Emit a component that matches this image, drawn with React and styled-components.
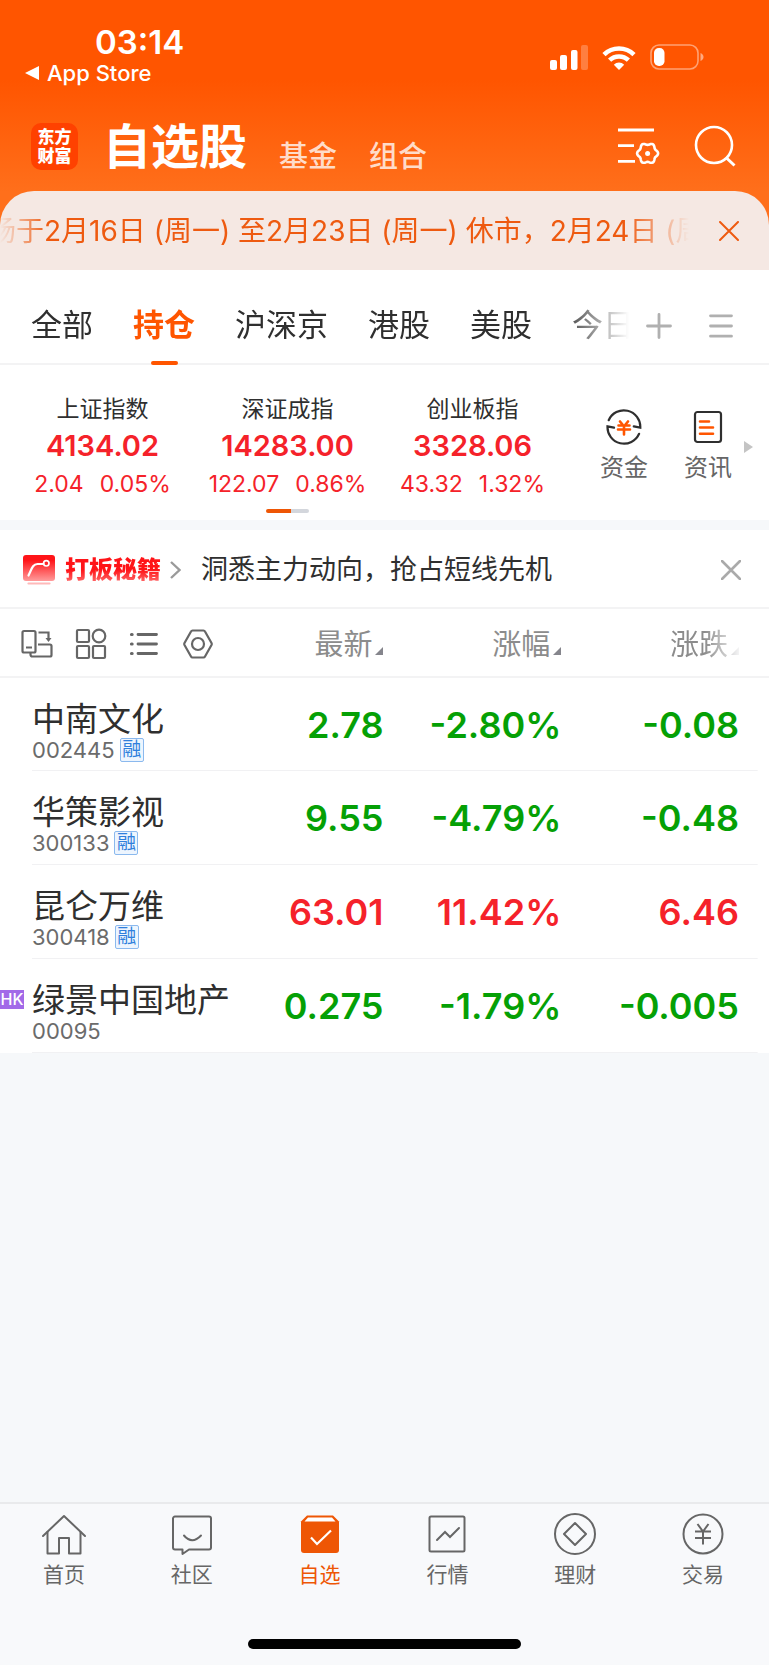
import React from "react";
import styled, { createGlobalStyle } from "styled-components";

const UP = "#f5222a";
const DOWN = "#05a005";
const ORANGE = "#ff5500";

const GlobalStyle = createGlobalStyle`
  * {
    box-sizing: border-box;
  }
  body {
    margin: 0;
    background: #f6f8fa;
    color: #2f2f2f;
    font-family: Inter, "Noto Sans CJK SC", sans-serif;
  }
  button {
    padding: 0;
    border: none;
    background: none;
    color: inherit;
    font: inherit;
    white-space: nowrap;
    cursor: pointer;
  }
  a {
    color: inherit;
    text-decoration: none;
  }
  svg {
    display: block;
    flex: none;
  }
`;

const indexes = [
  { name: "上证指数", value: "4134.02", change: "2.04", rate: "0.05%" },
  { name: "深证成指", value: "14283.00", change: "122.07", rate: "0.86%" },
  { name: "创业板指", value: "3328.06", change: "43.32", rate: "1.32%" },
];

const groups = ["全部", "持仓", "沪深京", "港股", "美股", "今日"];

const stocks = [
  { name: "中南文化", code: "002445", margin: true, price: "2.78", rate: "-2.80%", change: "-0.08" },
  { name: "华策影视", code: "300133", margin: true, price: "9.55", rate: "-4.79%", change: "-0.48" },
  { name: "昆仑万维", code: "300418", margin: true, price: "63.01", rate: "11.42%", change: "6.46", up: true },
  { name: "绿景中国地产", code: "00095", hk: true, price: "0.275", rate: "-1.79%", change: "-0.005" },
];

// 六瓣齿轮轮廓
const gearPath = (cx, cy, r, depth) => {
  const points = [];
  for (let deg = 0; deg < 360; deg += 6) {
    const t = (deg * Math.PI) / 180;
    const d = r + depth * Math.cos(6 * t);
    points.push(`${(cx + d * Math.cos(t)).toFixed(2)} ${(cy + d * Math.sin(t)).toFixed(2)}`);
  }
  return `M${points.join("L")}Z`;
};

const SignalIcon = () => (
  <svg width="38" height="25" viewBox="0 0 38 25" fill="#fff">
    <rect x="0" y="15" width="7" height="10" rx="2" />
    <rect x="10" y="10" width="7" height="15" rx="2" />
    <rect x="21" y="5" width="6.5" height="20" rx="2" />
    <rect x="31" y="0" width="7" height="25" rx="2" opacity="0.25" />
  </svg>
);

const WifiIcon = () => (
  <svg width="34" height="25" viewBox="0 0 34 25" fill="none" stroke="#fff" strokeWidth="4.6">
    <path d="M2 9.6a21.6 21.6 0 0 1 30 0" />
    <path d="M7.6 15.2a13.6 13.6 0 0 1 18.8 0" />
    <path d="M17 25l-5.2-5.3a7.5 7.5 0 0 1 10.4 0z" fill="#fff" stroke="none" />
  </svg>
);

const BatteryIcon = () => (
  <svg width="54" height="26" viewBox="0 0 54 26" fill="none">
    <rect x="1" y="1" width="47" height="24" rx="8" stroke="#fff" strokeOpacity="0.45" strokeWidth="1.6" />
    <rect x="4" y="4" width="10.5" height="18" rx="4.8" fill="#fff" />
    <path d="M50.5 9c4 1.5 4 6.5 0 8z" fill="#fff" fillOpacity="0.5" />
  </svg>
);

const ListGearIcon = () => (
  <svg width="42" height="38" viewBox="0 0 42 38" fill="none" stroke="#fff" strokeWidth="2.8">
    <path d="M0 3h36M0 18.6h16M0 34.4h17" />
    <path d={gearPath(29.6, 26.4, 9.5, 1)} strokeWidth="2.6" strokeLinejoin="round" />
    <circle cx="29.6" cy="26.4" r="2.5" fill="#fff" stroke="none" />
  </svg>
);

const SearchIcon = () => (
  <svg width="42" height="42" viewBox="0 0 42 42" fill="none" stroke="#fff" strokeWidth="2.6">
    <circle cx="20" cy="20" r="18" />
    <path d="M32 32.5l8.5 8" strokeWidth="3" />
  </svg>
);

const CloseIcon = ({ color, width = 2 }) => (
  <svg width="20" height="20" viewBox="0 0 20 20" fill="none" stroke={color} strokeWidth={width} strokeLinecap="round">
    <path d="M1 1l18 18M19 1L1 19" />
  </svg>
);

const PlusIcon = () => (
  <svg width="26" height="26" viewBox="0 0 26 26" fill="none" stroke="#b0b0b0" strokeWidth="2.8" strokeLinecap="round">
    <path d="M13 1.5v23M1.5 13h23" />
  </svg>
);

const MenuIcon = () => (
  <svg width="24" height="24" viewBox="0 0 24 24" fill="none" stroke="#b0b0b0" strokeWidth="2.8" strokeLinecap="round">
    <path d="M1.5 1.8h21M1.5 12h21M1.5 22.2h21" />
  </svg>
);

const FundIcon = () => (
  <svg width="36" height="36" viewBox="0 0 36 36" fill="none" strokeLinecap="round">
    <path d="M2.7 11.2A16.5 16.5 0 0 1 34.3 18.6l-6.5-1.3" stroke="#2f2f2f" strokeWidth="2.2" />
    <path d="M33.1 24.8A16.5 16.5 0 0 1 1.5 17.4l6.5 1.3" stroke="#2f2f2f" strokeWidth="2.2" />
    <path d="M14 12.5l2.5 3M22 12.5l-2.5 3M12.5 16.5h11M12 20.5h12M18 16.5v9" stroke="#ff5500" strokeWidth="2.6" />
  </svg>
);

const NewsIcon = () => (
  <svg width="30" height="34" viewBox="0 0 30 34" fill="none" strokeLinecap="round">
    <rect x="2" y="2" width="26" height="30" rx="2.5" stroke="#2f2f2f" strokeWidth="2.2" />
    <path d="M7 11.5h9M7 17.5h13M7 23.8h13" stroke="#ff5500" strokeWidth="2.6" />
  </svg>
);

const PromoIcon = () => (
  <svg width="32" height="30" viewBox="0 0 32 30" fill="none">
    <defs>
      <linearGradient id="promo" x1="0" y1="0" x2="0" y2="1">
        <stop offset="0.2" stopColor="#ff1418" />
        <stop offset="1" stopColor="#ff9c9c" />
      </linearGradient>
    </defs>
    <rect width="32" height="26" rx="3" fill="url(#promo)" />
    <path d="M5.5 20.5c3-6 4-11.5 9-11.500h6" stroke="#fff" strokeWidth="2.2" strokeLinecap="round" />
    <circle cx="23.3" cy="8.3" r="2.7" stroke="#fff" strokeWidth="1.7" />
    <path d="M5.5 28.5h21" stroke="#ffb9b9" strokeWidth="2.2" strokeLinecap="round" />
  </svg>
);

const ChevronIcon = () => (
  <svg width="11" height="18" viewBox="0 0 11 18" fill="none" stroke="#9a9a9a" strokeWidth="2.4">
    <path d="M1 1l8.5 8L1 17" />
  </svg>
);

const RotateIcon = () => (
  <svg width="32" height="30" viewBox="0 0 32 30" fill="none" stroke="#666" strokeWidth="2.2">
    <path d="M9 23.5H3a1.5 1.5 0 0 1-1.5-1.5V3.5A1.5 1.5 0 0 1 3 2h10a1.5 1.5 0 0 1 1.5 1.5V22a1.5 1.5 0 0 1-1.5 1.5H9M5 18.5h6" />
    <path d="M17 15.5h12a1.5 1.5 0 0 1 1.5 1.5v9a1.5 1.5 0 0 1-1.5 1.5H11.5q-2 0-2-2V24M17.5 3.5h10v7" />
    <path d="M24.5 9h6l-3 4z" fill="#666" stroke="none" />
  </svg>
);

const GridIcon = () => (
  <svg width="32" height="32" viewBox="0 0 32 32" fill="none" stroke="#666" strokeWidth="2.2">
    <rect x="2" y="2" width="12" height="12" rx="1" />
    <circle cx="24" cy="8" r="6.3" />
    <rect x="2" y="18" width="12" height="12" rx="1" />
    <rect x="18" y="18" width="12" height="12" rx="1" />
  </svg>
);

const RowsIcon = () => (
  <svg width="30" height="24" viewBox="0 0 30 24" fill="none" stroke="#666" strokeWidth="2.8" strokeLinecap="round">
    <path d="M9 2.5h18.5M9 12h18.5M9 21.5h18.5" />
    <path d="M2.5 2.5h.6M2.5 12h.6M2.5 21.5h.6" strokeWidth="3.2" />
  </svg>
);

const HexIcon = () => (
  <svg width="32" height="30" viewBox="0 0 32 30" fill="none" stroke="#666" strokeWidth="2.2" strokeLinejoin="round">
    <path d="M11.5 1.5h11q1 0 1.500 1l6.500 11.500q.5 1 0 2L24 27.500q-.5 1-1.500 1h-11q-1 0-1.500-1L3.500 16q-.5-1 0-2L10 2.500q.5-1 1.500-1z" />
    <circle cx="17" cy="15" r="6" />
  </svg>
);

const HomeIcon = () => (
  <svg width="44" height="44" viewBox="0 0 44 44" fill="none" stroke="#666" strokeWidth="2" strokeLinejoin="round" strokeLinecap="round">
    <path d="M1 23L22 3l21 20" />
    <path d="M5.5 19v21.500h11.500V25h10v15.500h11.500V19" />
  </svg>
);

const CommunityIcon = () => (
  <svg width="44" height="44" viewBox="0 0 44 44" fill="none" stroke="#666" strokeWidth="2" strokeLinejoin="round" strokeLinecap="round">
    <path d="M5 3.5h34a2 2 0 0 1 2 2v29a2 2 0 0 1-2 2H19l-6.500 4.500v-4.500H5a2 2 0 0 1-2-2v-29a2 2 0 0 1 2-2z" />
    <path d="M14 22.5q8 9.500 17 0" />
  </svg>
);

const WatchIcon = () => (
  <svg width="44" height="44" viewBox="0 0 44 44">
    <path d="M9 2.5h26l6 6V37a3 3 0 0 1-3 3H6a3 3 0 0 1-3-3V8.500z" fill="#ee5605" />
    <path d="M10 4.5h24l3.500 4H6.500z" fill="#fff" />
    <path d="M13 24.5l6 6.500 14-13.500" fill="none" stroke="#fff" strokeWidth="2.2" />
  </svg>
);

const MarketIcon = () => (
  <svg width="44" height="44" viewBox="0 0 44 44" fill="none" stroke="#666" strokeWidth="2" strokeLinecap="round">
    <rect x="4.5" y="3.5" width="35" height="35" rx="1.5" />
    <path d="M12 27l8-8 5 5 9-9" />
  </svg>
);

const WealthIcon = () => (
  <svg width="44" height="44" viewBox="0 0 44 44" fill="none" stroke="#666" strokeWidth="2" strokeLinejoin="round">
    <circle cx="22" cy="21" r="20" />
    <path d="M22 10l11 11-11 11-11-11z" />
  </svg>
);

const TradeIcon = () => (
  <svg width="44" height="44" viewBox="0 0 44 44" fill="none" stroke="#666" strokeWidth="2">
    <circle cx="22" cy="21" r="19.5" />
    <path d="M16.5 11l5.5 7.5 5.5-7.5M14 18.5h16M14 25h16M22 18.5v13" />
  </svg>
);

const tabs = [
  { label: "首页", Icon: HomeIcon },
  { label: "社区", Icon: CommunityIcon },
  { label: "自选", Icon: WatchIcon, active: true },
  { label: "行情", Icon: MarketIcon },
  { label: "理财", Icon: WealthIcon },
  { label: "交易", Icon: TradeIcon },
];

const App = () => {
  return (
    <Page>
      <GlobalStyle />
      <Header>
        <StatusBar>
          <div>
            <Time>03:14</Time>
            <BackLink href="#">App Store</BackLink>
          </div>
          <StatusIcons>
            <SignalIcon />
            <WifiIcon />
            <BatteryIcon />
          </StatusIcons>
        </StatusBar>
        <TitleBar>
          <Logo>
            <span>东方</span>
            <span>财富</span>
          </Logo>
          <Title>自选股</Title>
          <SubTitle>基金</SubTitle>
          <SubTitle>组合</SubTitle>
          <TitleActions>
            <button aria-label="设置">
              <ListGearIcon />
            </button>
            <button aria-label="搜索">
              <SearchIcon />
            </button>
          </TitleActions>
        </TitleBar>
        <Notice>
          <NoticeWindow>
            <NoticeText>场于2月16日 (周一) 至2月23日 (周一) 休市，2月24日 (周</NoticeText>
          </NoticeWindow>
          <button aria-label="关闭公告">
            <CloseIcon color="#ee5a10" />
          </button>
        </Notice>
      </Header>

      <GroupBar>
        <GroupList>
          {groups.map((name) => (
            <GroupTab key={name} $active={name === "持仓"}>
              {name}
            </GroupTab>
          ))}
        </GroupList>
        <GroupActions>
          <button aria-label="添加">
            <PlusIcon />
          </button>
          <button aria-label="分组管理">
            <MenuIcon />
          </button>
        </GroupActions>
      </GroupBar>

      <IndexPanel>
        <IndexArea>
          <IndexList>
            {indexes.map((item) => (
              <IndexCard key={item.name}>
                <IndexName>{item.name}</IndexName>
                <IndexValue>{item.value}</IndexValue>
                <IndexChange>
                  <span>{item.change}</span>
                  <span>{item.rate}</span>
                </IndexChange>
              </IndexCard>
            ))}
          </IndexList>
          <Pager />
        </IndexArea>
        <Shortcuts>
          <Shortcut>
            <FundIcon />
            资金
          </Shortcut>
          <Shortcut>
            <NewsIcon />
            资讯
          </Shortcut>
          <MoreArrow />
        </Shortcuts>
      </IndexPanel>

      <Promo>
        <PromoIcon />
        <PromoName>打板秘籍</PromoName>
        <ChevronIcon />
        <PromoText href="#">洞悉主力动向，抢占短线先机</PromoText>
        <button aria-label="关闭">
          <CloseIcon color="#aaa" width={2.6} />
        </button>
      </Promo>

      <StockTable>
        <thead>
          <tr>
            <ToolCell>
              <Tools>
                <button aria-label="横屏">
                  <RotateIcon />
                </button>
                <button aria-label="宫格">
                  <GridIcon />
                </button>
                <button aria-label="列表">
                  <RowsIcon />
                </button>
                <button aria-label="表头设置">
                  <HexIcon />
                </button>
              </Tools>
            </ToolCell>
            <SortCell>
              <SortButton>最新</SortButton>
            </SortCell>
            <SortCell>
              <SortButton>涨幅</SortButton>
            </SortCell>
            <SortCell>
              <SortButton $fade>涨跌</SortButton>
            </SortCell>
          </tr>
        </thead>
        <tbody>
          {stocks.map((stock) => (
            <StockRow key={stock.code}>
              <NameCell>
                {stock.hk && <HkTag>HK</HkTag>}
                <StockName>{stock.name}</StockName>
                <StockCode>
                  {stock.code}
                  {stock.margin && <MarginTag>融</MarginTag>}
                </StockCode>
              </NameCell>
              <NumberCell $up={stock.up}>{stock.price}</NumberCell>
              <NumberCell $up={stock.up}>{stock.rate}</NumberCell>
              <NumberCell $up={stock.up}>{stock.change}</NumberCell>
            </StockRow>
          ))}
        </tbody>
      </StockTable>

      <BottomBar>
        <TabList>
          {tabs.map(({ label, Icon, active }) => (
            <TabLink key={label} href="#" $active={active}>
              <Icon />
              {label}
            </TabLink>
          ))}
        </TabList>
        <HomeIndicator />
      </BottomBar>
    </Page>
  );
};

// 页面与头部
const Page = styled.div`
  display: flex;
  flex-direction: column;
  min-height: 100vh;
  overflow: hidden;
`;

const Header = styled.header`
  background: linear-gradient(#ff5500 80px, #ff6f1b 192px);
  color: #fff;
`;

const StatusBar = styled.div`
  display: flex;
  justify-content: space-between;
  align-items: flex-end;
  padding: 23px 65px 0 25px;
`;

const Time = styled.div`
  padding-left: 70px;
  font-size: 33px;
  font-weight: 600;
  line-height: 38px;
`;

const BackLink = styled.a`
  display: flex;
  align-items: center;
  gap: 8px;
  font-size: 22px;
  font-weight: 500;
  line-height: 24px;
  &::before {
    content: "";
    border: 7px solid transparent;
    border-left: 0;
    border-right: 14px solid #fff;
  }
`;

const StatusIcons = styled.div`
  display: flex;
  align-items: center;
  gap: 14px;
  padding-bottom: 15px;
`;

const TitleBar = styled.div`
  display: flex;
  align-items: flex-end;
  padding: 38px 33px 21px 31px;
`;

const Logo = styled.div`
  display: flex;
  flex-direction: column;
  justify-content: center;
  width: 47px;
  height: 47px;
  border-radius: 10px;
  background: #ff4100;
  font-size: 17px;
  font-weight: 900;
  line-height: 19px;
  text-align: center;
`;

const Title = styled.h1`
  margin: 0 0 0 25px;
  font-size: 48px;
  font-weight: 700;
  line-height: 47px;
`;

const SubTitle = styled.button`
  && {
    margin-left: 32px;
    color: #ffdcc9;
    font-size: 29px;
    font-weight: 500;
    line-height: 26px;
  }
`;

const TitleActions = styled.div`
  display: flex;
  align-items: center;
  gap: 34px;
  margin-left: auto;
  padding-bottom: 3px;
`;

const Notice = styled.div`
  display: flex;
  align-items: center;
  justify-content: space-between;
  height: 79px;
  padding-right: 30px;
  border-radius: 34px 34px 0 0;
  background: #f5e8e3;
`;

const NoticeWindow = styled.div`
  flex: 1;
  margin-right: 30px;
  overflow: hidden;
  mask-image: linear-gradient(to right, transparent, #000 48px, #000 calc(100% - 64px), transparent);
`;

const NoticeText = styled.p`
  margin: 0 0 0 -12px;
  color: #ee5a10;
  font-size: 28px;
  line-height: 40px;
  white-space: nowrap;
`;

// 分组
const GroupBar = styled.nav`
  display: flex;
  align-items: stretch;
  height: 95px;
  padding: 0 36px 0 31px;
  border-bottom: 2px solid #f3f3f4;
  background: #fff;
`;

const GroupList = styled.div`
  display: flex;
  flex: 1;
  gap: 40px;
  min-width: 0;
  margin-bottom: -2px;
  overflow: hidden;
  mask-image: linear-gradient(to right, #000 calc(100% - 70px), transparent);
`;

const GroupTab = styled.button`
  && {
    display: flex;
    flex: none;
    flex-direction: column;
    align-items: center;
    justify-content: space-between;
    color: ${(props) => (props.$active ? ORANGE : "#2f2f2f")};
    font-size: 31px;
    font-weight: ${(props) => (props.$active ? 700 : 400)};
    line-height: 110px;
  }
  &::after {
    content: "";
    width: 27px;
    height: 4px;
    margin-top: -20px;
    border-radius: 2px;
    background: ${(props) => (props.$active ? ORANGE : "transparent")};
  }
`;

const GroupActions = styled.div`
  display: flex;
  align-items: center;
  gap: 37px;
  padding: 18px 0 0 17px;
`;

// 指数
const IndexPanel = styled.section`
  display: flex;
  height: 155px;
  padding: 0 16px 0 10px;
  background: #fff;
`;

const IndexArea = styled.div`
  flex: 1;
  padding-top: 26px;
`;

const IndexList = styled.div`
  display: grid;
  grid-template-columns: repeat(3, 1fr);
`;

const IndexCard = styled.div`
  text-align: center;
`;

const IndexName = styled.div`
  font-size: 23px;
  line-height: 36px;
`;

const IndexValue = styled.div`
  color: ${UP};
  font-size: 29px;
  font-weight: 600;
  line-height: 38px;
`;

const IndexChange = styled.div`
  display: flex;
  justify-content: center;
  gap: 16px;
  color: ${UP};
  font-size: 23px;
  line-height: 38px;
`;

const Pager = styled.div`
  width: 43px;
  height: 4px;
  margin: 6px auto 0;
  border-radius: 2px;
  background: linear-gradient(to right, #ee5605 25px, #d3d6dc 25px);
`;

const Shortcuts = styled.div`
  display: flex;
  align-items: center;
  gap: 36px;
  padding: 9px 0 0 35px;
`;

const Shortcut = styled.button`
  && {
    display: flex;
    flex-direction: column;
    align-items: center;
    gap: 6px;
    color: #666;
    font-size: 24px;
    line-height: 34px;
  }
  svg {
    height: 36px;
  }
`;

const MoreArrow = styled.span`
  margin-left: -24px;
  border: 6px solid transparent;
  border-right: 0;
  border-left: 9px solid #c4c4c4;
`;

// 推广
const Promo = styled.section`
  display: flex;
  align-items: center;
  height: 79px;
  margin-top: 10px;
  padding: 2px 28px 0 23px;
  border-bottom: 2px solid #f3f3f4;
  background: #fff;
`;

const PromoName = styled.strong`
  margin: 0 9px 0 10px;
  background: linear-gradient(#ff1418 50%, #ff7878 90%);
  background-clip: text;
  color: transparent;
  font-size: 24px;
  font-weight: 900;
  line-height: 36px;
`;

const PromoText = styled.a`
  flex: 1;
  margin-left: 20px;
  font-size: 27px;
  line-height: 40px;
`;

// 自选列表
const StockTable = styled.table`
  width: 100%;
  border-collapse: collapse;
  table-layout: fixed;
  background: #fff;
`;

const ToolCell = styled.th`
  width: 34%;
  height: 68px;
  padding: 2px 0 0 21px;
  border-bottom: 2px solid #f3f3f4;
`;

const Tools = styled.div`
  display: flex;
  align-items: center;
  gap: 22px;
`;

const SortCell = styled.th`
  padding: 4px 0 0;
  border-bottom: 2px solid #f3f3f4;
  text-align: right;
  &:nth-child(2) {
    width: 16%;
    padding-right: 1px;
  }
  &:nth-child(3) {
    width: 23%;
  }
  &:nth-child(4) {
    padding-right: 30px;
  }
`;

const SortButton = styled.button`
  && {
    color: #8c8c8c;
    font-size: 29px;
    font-weight: 400;
    line-height: 40px;
  }
  mask-image: ${(props) =>
    props.$fade ? "linear-gradient(to right, #000 50%, transparent 105%)" : "none"};
  &::after {
    content: "";
    display: inline-block;
    margin-left: 3px;
    border-bottom: 8px solid #85858c;
    border-left: 8px solid transparent;
  }
`;

const StockRow = styled.tr`
  height: 94px;
  background: linear-gradient(#f1f1f3, #f1f1f3) 32px 100% / calc(100% - 43px) 1px no-repeat;
`;

const NameCell = styled.td`
  position: relative;
  padding: 14px 0 0 32px;
  vertical-align: middle;
  white-space: nowrap;
`;

const StockName = styled.div`
  font-size: 33px;
  line-height: 36px;
`;

const StockCode = styled.div`
  display: flex;
  align-items: center;
  gap: 5px;
  color: #6b6b6b;
  font-size: 22px;
  line-height: 26px;
`;

const MarginTag = styled.span`
  width: 24px;
  height: 24px;
  border: 1px solid #8bb9ee;
  border-radius: 2px;
  background: #edf5fe;
  color: #2f7fdc;
  font-size: 19px;
  line-height: 21px;
  text-align: center;
`;

const HkTag = styled.span`
  position: absolute;
  top: 31px;
  left: 0;
  width: 24px;
  background: #a26ae8;
  color: #fff;
  font-size: 16px;
  font-weight: 500;
  line-height: 19px;
  text-align: center;
`;

const NumberCell = styled.td`
  padding: 0;
  color: ${(props) => (props.$up ? UP : DOWN)};
  font-size: 36px;
  font-weight: 600;
  text-align: right;
  &:nth-child(2) {
    padding-right: 1px;
  }
  &:last-child {
    padding-right: 30px;
  }
`;

// 底部导航
const BottomBar = styled.footer`
  margin-top: auto;
  border-top: 2px solid #e9eaec;
  background: #f8f9fb;
`;

const TabList = styled.nav`
  display: grid;
  grid-template-columns: repeat(6, 1fr);
  padding: 9px 2px 0 0;
`;

const TabLink = styled.a`
  display: flex;
  flex-direction: column;
  align-items: center;
  gap: 2px;
  color: ${(props) => (props.$active ? "#ee5605" : "#666")};
  font-size: 21px;
  line-height: 32px;
`;

const HomeIndicator = styled.div`
  width: 273px;
  height: 10px;
  margin: 48px auto 16px;
  border-radius: 5px;
  background: #000;
`;

export default App;
